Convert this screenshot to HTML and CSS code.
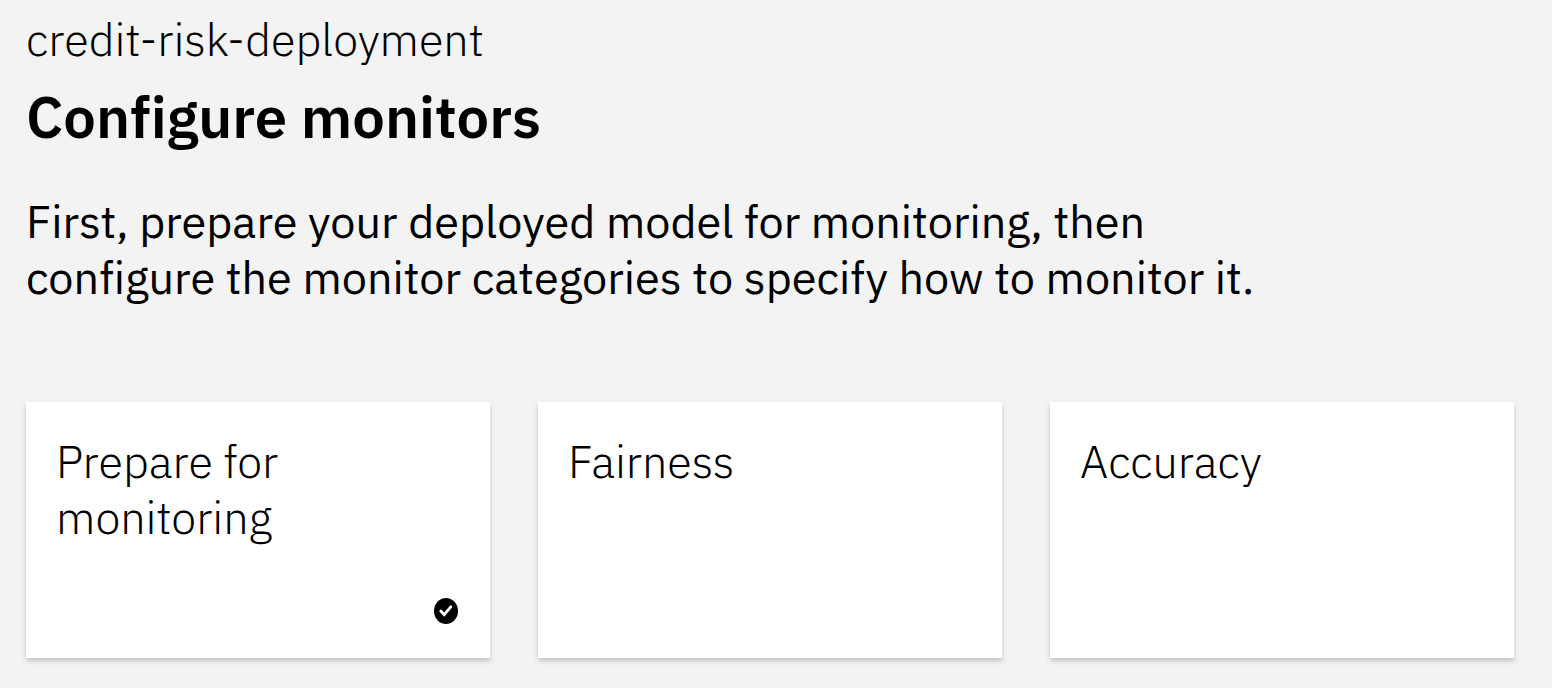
FILE: index.html
```html
<!DOCTYPE html>
<html lang="en">
<head>
<meta charset="utf-8">
<meta name="viewport" content="width=device-width, initial-scale=1">
<title>Configure monitors</title>
<link rel="stylesheet" href="styles.css">
</head>
<body>
<main class="page">
  <header class="intro">
    <p class="deployment">credit-risk-deployment</p>
    <h1 class="title">Configure monitors</h1>
    <p class="lead">First, prepare your deployed model for monitoring, then<br>configure the monitor categories to specify how to monitor it.</p>
  </header>
  <section class="cards" aria-label="Monitors">
    <article class="card">
      <h2 class="card-title">Prepare for monitoring</h2>
      <svg class="status" viewBox="0 0 24 26" role="img" aria-label="Complete">
        <ellipse cx="12" cy="13" rx="12" ry="13"/>
        <path d="M6.8 13 10.2 16.6 16.8 8.8" fill="none" stroke="#fff" stroke-width="2.8" stroke-linecap="round"/>
      </svg>
    </article>
    <article class="card"><h2 class="card-title">Fairness</h2></article>
    <article class="card"><h2 class="card-title">Accuracy</h2></article>
  </section>
</main>
</body>
</html>
```
FILE: styles.css
```css
* { box-sizing: border-box; }
body {
  margin: 0;
  background: #f3f3f3;
  color: #000;
  font-family: "IBM Plex Sans", Roboto, sans-serif;
  font-variant-ligatures: none;
}
.page { padding: 11px 38px 28px 26px; }
.deployment, .title, .lead, .card-title { margin: 0; }
.deployment { font-size: 45px; line-height: 56px; font-weight: 300; }
.title { margin-top: 14px; font-size: 58px; line-height: 72px; font-weight: 600; }
.lead { margin-top: 40px; font-size: 45px; line-height: 56px; font-weight: 400; }
.cards {
  display: grid;
  grid-template-columns: repeat(3, 1fr);
  gap: 48px;
  margin-top: 97px;
}
.card {
  display: flex;
  flex-direction: column;
  min-height: 256px;
  padding: 31px 32px 34px 30px;
  background: #fff;
  box-shadow: 0 3px 5px rgba(0, 0, 0, 0.2);
}
.card-title { max-width: 260px; font-size: 45px; line-height: 56px; font-weight: 300; }
.status { width: 24px; height: 26px; margin-top: auto; align-self: flex-end; }
```
